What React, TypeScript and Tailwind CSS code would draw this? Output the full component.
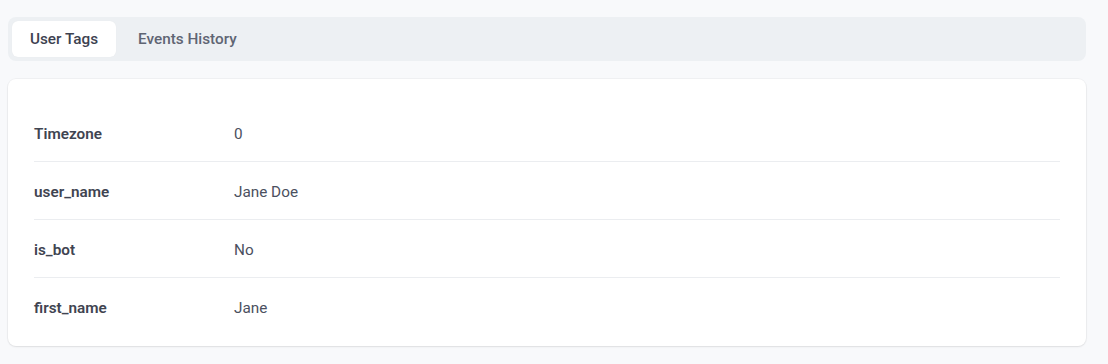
const tags = [
  { key: 'Timezone', value: '0' },
  { key: 'user_name', value: 'Jane Doe' },
  { key: 'is_bot', value: 'No' },
  { key: 'first_name', value: 'Jane' },
];

export default function App() {
  return (
    <div className="min-h-[364px] bg-[#f8f9fb] pl-2 pr-[22px] pt-[17px] font-['Roboto',sans-serif]">
      <div className="flex h-[44px] items-center rounded-lg bg-[#edf0f3] px-1">
        <button
          type="button"
          className="h-[36px] w-[104px] rounded-md bg-white text-[15.3px] font-medium text-[#3d4250] shadow-[0_0_1px_rgba(0,0,0,0.06)]"
        >
          User Tags
        </button>
        <button type="button" className="h-[36px] px-[22px] text-[15.3px] font-medium text-[#5f6573]">
          Events History
        </button>
      </div>

      <div className="mt-[18px] rounded-lg bg-white px-[26px] pt-[25px] pb-[10px] shadow-[0_1px_2px_rgba(0,0,0,0.08),0_0_0_1px_rgba(0,0,0,0.03)]">
        {tags.map((tag, i) => (
          <div
            key={tag.key}
            className={`flex h-[58px] items-center pt-[3px] text-[15.3px] ${i < tags.length - 1 ? 'border-b border-[#ebedf0]' : ''}`}
          >
            <div className="w-[200px] font-semibold text-[#3f4451]">{tag.key}</div>
            <div className="text-[#4b5060]">{tag.value}</div>
          </div>
        ))}
      </div>
    </div>
  );
}
